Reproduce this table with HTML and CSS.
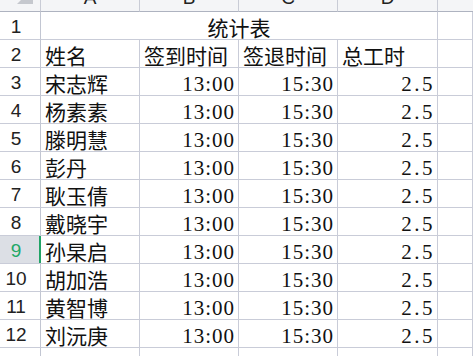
FILE: index.html
```html
<!DOCTYPE html>
<html lang="zh">
<head>
<meta charset="utf-8">
<title>统计表</title>
<link rel="stylesheet" href="styles.css">
</head>
<body>
<div class="sheet">
  <div class="corner"><svg class="tri" width="40" height="11" viewBox="0 0 40 11"><polygon points="33,-12 33,4 17,4" fill="#c5c8ce"/></svg></div>
  <div class="ch"><span>A</span></div>
  <div class="ch"><span>B</span></div>
  <div class="ch"><span>C</span></div>
  <div class="ch"><span>D</span></div>
  <div class="ch last"></div>

  <div class="rh"><span>1</span></div>
  <div class="c title">统计表</div>
  <div class="c"></div>

  <div class="rh"><span>2</span></div>
  <div class="c">姓名</div>
  <div class="c">签到时间</div>
  <div class="c">签退时间</div>
  <div class="c">总工时</div>
  <div class="c"></div>

  <div class="rh"><span>3</span></div>
  <div class="c">宋志辉</div><div class="c n">13:00</div><div class="c n">15:30</div><div class="c n d">2.5</div><div class="c"></div>
  <div class="rh"><span>4</span></div>
  <div class="c">杨素素</div><div class="c n">13:00</div><div class="c n">15:30</div><div class="c n d">2.5</div><div class="c"></div>
  <div class="rh"><span>5</span></div>
  <div class="c">滕明慧</div><div class="c n">13:00</div><div class="c n">15:30</div><div class="c n d">2.5</div><div class="c"></div>
  <div class="rh"><span>6</span></div>
  <div class="c">彭丹</div><div class="c n">13:00</div><div class="c n">15:30</div><div class="c n d">2.5</div><div class="c"></div>
  <div class="rh"><span>7</span></div>
  <div class="c">耿玉倩</div><div class="c n">13:00</div><div class="c n">15:30</div><div class="c n d">2.5</div><div class="c"></div>
  <div class="rh"><span>8</span></div>
  <div class="c">戴晓宇</div><div class="c n">13:00</div><div class="c n">15:30</div><div class="c n d">2.5</div><div class="c"></div>
  <div class="rh sel"><span>9</span></div>
  <div class="c active">孙杲启</div><div class="c n">13:00</div><div class="c n">15:30</div><div class="c n d">2.5</div><div class="c"></div>
  <div class="rh"><span>10</span></div>
  <div class="c">胡加浩</div><div class="c n">13:00</div><div class="c n">15:30</div><div class="c n d">2.5</div><div class="c"></div>
  <div class="rh"><span>11</span></div>
  <div class="c">黄智博</div><div class="c n">13:00</div><div class="c n">15:30</div><div class="c n d">2.5</div><div class="c"></div>
  <div class="rh"><span>12</span></div>
  <div class="c">刘沅庚</div><div class="c n">13:00</div><div class="c n">15:30</div><div class="c n d">2.5</div><div class="c"></div>
  <div class="rh"><span>13</span></div>
  <div class="c"></div><div class="c"></div><div class="c"></div><div class="c"></div><div class="c"></div>
</div>
</body>
</html>
```
FILE: styles.css
```css
html, body {
  margin: 0;
  padding: 0;
  background: #ffffff;
  overflow: hidden;
}

.sheet {
  display: grid;
  grid-template-columns: 41px 99px 99px 99px 100px 1fr;
  grid-template-rows: 12px repeat(13, 28px);
  width: 473px;
  height: 356px;
  overflow: hidden;
}

.corner, .ch {
  background: #f4f5f7;
  border-bottom: 1px solid #aeb3c0;
  border-right: 1px solid #c9ccd6;
  box-sizing: border-box;
  overflow: hidden;
  position: relative;
}

.tri {
  position: absolute;
  left: 0;
  top: 0;
}

.ch {
  display: flex;
  justify-content: center;
  align-items: flex-end;
  padding-bottom: 4px;
  font-family: "Liberation Sans", Arial, sans-serif;
  font-size: 19px;
  line-height: 19px;
  color: #222;
}

.ch.last {
  border-right: none;
}

.rh {
  display: flex;
  justify-content: center;
  align-items: flex-end;
  padding: 0 8px 3px 0;
  box-sizing: border-box;
  border-right: 1px solid #c2c6d2;
  border-bottom: 1px solid #c9ccd8;
  font-family: "Liberation Sans", Arial, sans-serif;
  font-size: 19px;
  line-height: 19px;
  color: #222;
  background: #ffffff;
  overflow: hidden;
}

.rh.sel {
  background: #dcdfe5;
  color: #22a867;
}

.c {
  display: flex;
  align-items: flex-end;
  padding: 0 4px 1px 4px;
  box-sizing: border-box;
  border-right: 1px solid #c9ccd8;
  border-bottom: 1px solid #c9ccd8;
  font-family: "Noto Sans CJK SC", "Noto Sans", sans-serif;
  font-size: 21px;
  line-height: 21px;
  color: #111;
  white-space: nowrap;
  overflow: hidden;
  position: relative;
}

.c.title {
  grid-column: 2 / 6;
  justify-content: center;
}

.c.n {
  justify-content: flex-end;
  font-family: "Liberation Serif", "Times New Roman", serif;
  letter-spacing: 1px;
  padding-right: 3px;
  padding-bottom: 0;
}

.c.n.d {
  word-spacing: 0;
  letter-spacing: 2.5px;
  padding-right: 2px;
}

.c.active {
  overflow: visible;
}

.c.active::before {
  content: "";
  position: absolute;
  left: -2px;
  top: 0;
  bottom: 0;
  width: 2px;
  background: #21a366;
}
```
